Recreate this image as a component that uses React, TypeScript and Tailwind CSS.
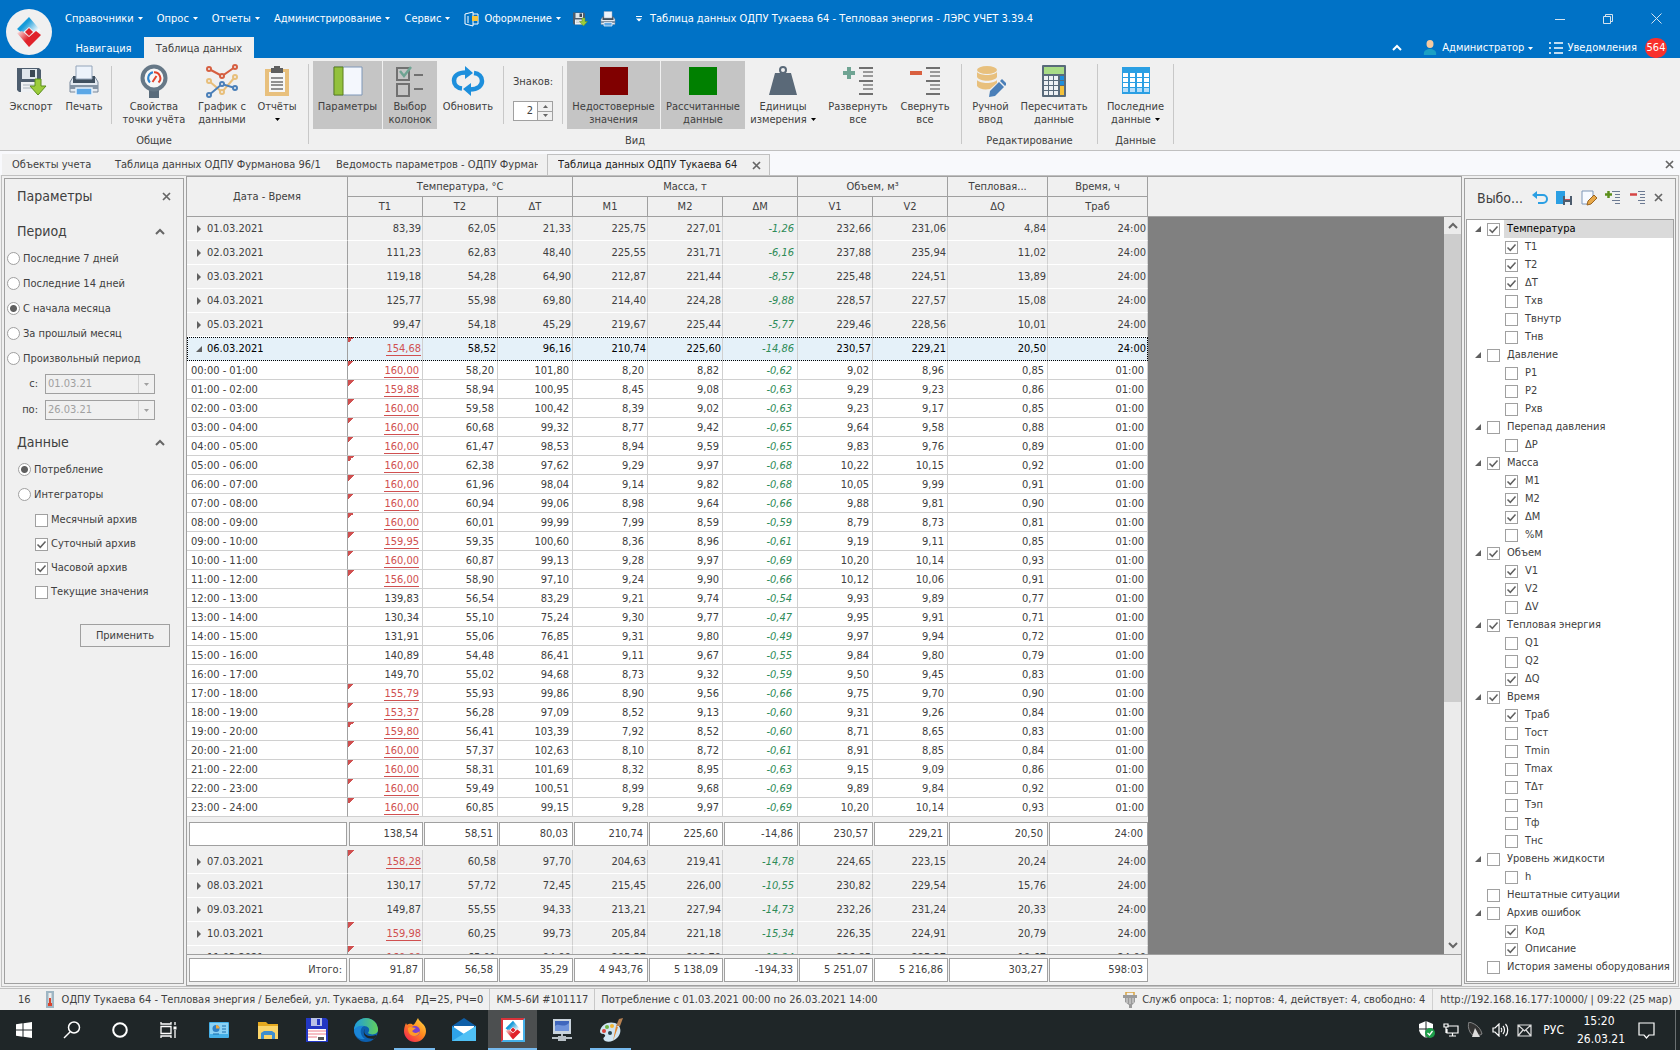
import type { ReactNode } from "react";
import { clsx } from "clsx";

type Row = { label: string; values: string[] };

const columns = ["T1", "T2", "ΔT", "M1", "M2", "ΔM", "V1", "V2", "ΔQ", "Tраб"];

const groups = [
  { title: "Температура, °C", span: 3 },
  { title: "Масса, т", span: 3 },
  { title: "Объем, м³", span: 2 },
  { title: "Тепловая...", span: 1 },
  { title: "Время, ч", span: 1 },
];

const parse = (text: string): Row[] =>
  text
    .trim()
    .split("\n")
    .map((line) => {
      const [label, ...values] = line.trim().split("|");
      return { label, values };
    });

// a leading "!" marks an unreliable value
const daysBefore = parse(`
01.03.2021|83,39|62,05|21,33|225,75|227,01|-1,26|232,66|231,06|4,84|24:00
02.03.2021|111,23|62,83|48,40|225,55|231,71|-6,16|237,88|235,94|11,02|24:00
03.03.2021|119,18|54,28|64,90|212,87|221,44|-8,57|225,48|224,51|13,89|24:00
04.03.2021|125,77|55,98|69,80|214,40|224,28|-9,88|228,57|227,57|15,08|24:00
05.03.2021|99,47|54,18|45,29|219,67|225,44|-5,77|229,46|228,56|10,01|24:00
06.03.2021|!154,68|58,52|96,16|210,74|225,60|-14,86|230,57|229,21|20,50|24:00
`);

const hours = parse(`
00:00 - 01:00|!160,00|58,20|101,80|8,20|8,82|-0,62|9,02|8,96|0,85|01:00
01:00 - 02:00|!159,88|58,94|100,95|8,45|9,08|-0,63|9,29|9,23|0,86|01:00
02:00 - 03:00|!160,00|59,58|100,42|8,39|9,02|-0,63|9,23|9,17|0,85|01:00
03:00 - 04:00|!160,00|60,68|99,32|8,77|9,42|-0,65|9,64|9,58|0,88|01:00
04:00 - 05:00|!160,00|61,47|98,53|8,94|9,59|-0,65|9,83|9,76|0,89|01:00
05:00 - 06:00|!160,00|62,38|97,62|9,29|9,97|-0,68|10,22|10,15|0,92|01:00
06:00 - 07:00|!160,00|61,96|98,04|9,14|9,82|-0,68|10,05|9,99|0,91|01:00
07:00 - 08:00|!160,00|60,94|99,06|8,98|9,64|-0,66|9,88|9,81|0,90|01:00
08:00 - 09:00|!160,00|60,01|99,99|7,99|8,59|-0,59|8,79|8,73|0,81|01:00
09:00 - 10:00|!159,95|59,35|100,60|8,36|8,96|-0,61|9,19|9,11|0,85|01:00
10:00 - 11:00|!160,00|60,87|99,13|9,28|9,97|-0,69|10,20|10,14|0,93|01:00
11:00 - 12:00|!156,00|58,90|97,10|9,24|9,90|-0,66|10,12|10,06|0,91|01:00
12:00 - 13:00|139,83|56,54|83,29|9,21|9,74|-0,54|9,93|9,89|0,77|01:00
13:00 - 14:00|130,34|55,10|75,24|9,30|9,77|-0,47|9,95|9,91|0,71|01:00
14:00 - 15:00|131,91|55,06|76,85|9,31|9,80|-0,49|9,97|9,94|0,72|01:00
15:00 - 16:00|140,89|54,48|86,41|9,11|9,67|-0,55|9,84|9,80|0,79|01:00
16:00 - 17:00|149,70|55,02|94,68|8,73|9,32|-0,59|9,50|9,45|0,83|01:00
17:00 - 18:00|!155,79|55,93|99,86|8,90|9,56|-0,66|9,75|9,70|0,90|01:00
18:00 - 19:00|!153,37|56,28|97,09|8,52|9,13|-0,60|9,31|9,26|0,84|01:00
19:00 - 20:00|!159,80|56,41|103,39|7,92|8,52|-0,60|8,71|8,65|0,83|01:00
20:00 - 21:00|!160,00|57,37|102,63|8,10|8,72|-0,61|8,91|8,85|0,84|01:00
21:00 - 22:00|!160,00|58,31|101,69|8,32|8,95|-0,63|9,15|9,09|0,86|01:00
22:00 - 23:00|!160,00|59,49|100,51|8,99|9,68|-0,69|9,89|9,84|0,92|01:00
23:00 - 24:00|!160,00|60,85|99,15|9,28|9,97|-0,69|10,20|10,14|0,93|01:00
`);

const daySummary = parse(`
|138,54|58,51|80,03|210,74|225,60|-14,86|230,57|229,21|20,50|24:00
`)[0];

const daysAfter = parse(`
07.03.2021|!158,28|60,58|97,70|204,63|219,41|-14,78|224,65|223,15|20,24|24:00
08.03.2021|130,17|57,72|72,45|215,45|226,00|-10,55|230,82|229,54|15,76|24:00
09.03.2021|149,87|55,55|94,33|213,21|227,94|-14,73|232,26|231,24|20,33|24:00
10.03.2021|!159,98|60,25|99,73|205,84|221,18|-15,34|226,35|224,91|20,79|24:00
11.03.2021|!160,00|65,01|94,99|205,57|218,79|-13,24|226,85|225,37|19,67|24:00
`);

const total = parse(`
Итого:|91,87|56,58|35,29|4 943,76|5 138,09|-194,33|5 251,07|5 216,86|303,27|598:03
`)[0];

type Node = { name: string; on?: boolean; children?: string[] };

// "+" in front of a child marks it as selected
const tree: Node[] = [
  { name: "Температура", on: true, children: ["+T1", "+T2", "+ΔT", "Tхв", "Tвнутр", "Tнв"] },
  { name: "Давление", children: ["P1", "P2", "Pхв"] },
  { name: "Перепад давления", children: ["ΔP"] },
  { name: "Масса", on: true, children: ["+M1", "+M2", "+ΔM", "%M"] },
  { name: "Объем", on: true, children: ["+V1", "+V2", "ΔV"] },
  { name: "Тепловая энергия", on: true, children: ["Q1", "Q2", "+ΔQ"] },
  { name: "Время", on: true, children: ["+Tраб", "Tост", "Tmin", "Tmax", "TΔт", "Tэп", "Tф", "Tнс"] },
  { name: "Уровень жидкости", children: ["h"] },
  { name: "Нештатные ситуации" },
  { name: "Архив ошибок", children: ["+Код", "+Описание"] },
  { name: "История замены оборудования" },
];

/* ---------- small parts ---------- */

const Caret = ({ className = "text-white" }: { className?: string }) => (
  <svg width="5" height="3" viewBox="0 0 5 3" className={clsx("shrink-0", className)}>
    <path d="M0 0h5L2.500 3z" fill="currentColor" />
  </svg>
);

const Cross = () => (
  <svg width="9" height="9" viewBox="0 0 9 9">
    <path d="M1 1l7 7M8 1l-7 7" stroke="#666" strokeWidth="1.700" />
  </svg>
);

const Chevron = ({ down = false }: { down?: boolean }) => (
  <svg width="10" height="7" viewBox="0 0 10 7" className={down ? "rotate-180" : ""}>
    <path d="M1 6l4-4 4 4" fill="none" stroke="#666" strokeWidth="2" />
  </svg>
);

const Divider = () => <div className="w-px self-stretch bg-[#c8c8c8]" />;

const CheckBox = ({ id, on }: { id: string; on?: boolean }) => (
  <span className="relative flex shrink-0">
    <input
      id={id}
      type="checkbox"
      defaultChecked={on}
      className="peer size-[13px] appearance-none border border-[#a0a0a0] bg-white"
    />
    <svg
      viewBox="0 0 13 13"
      className="pointer-events-none absolute inset-0 hidden size-[13px] peer-checked:block"
    >
      <path d="M2.500 6.500l2.800 2.800 5.200-5.800" fill="none" stroke="#606060" strokeWidth="1.500" />
    </svg>
  </span>
);

const Radio = ({ name, label, on }: { name: string; label: string; on?: boolean }) => (
  <label className="flex h-[25px] items-center gap-[3px]">
    <input
      type="radio"
      name={name}
      defaultChecked={on}
      className="size-[13px] shrink-0 appearance-none rounded-full border border-[#a0a0a0] bg-white checked:bg-[radial-gradient(circle,#5f5f5f_0_3px,#fff_4px)]"
    />
    {label}
  </label>
);

/* ---------- icons ---------- */

const SaveIcon = ({ size = 32 }: { size?: number }) => (
  <svg width={size} height={size} viewBox="0 0 32 32">
    <path d="M2 3h22l2 2v22H4l-2-2z" fill="#4d5d6e" />
    <path d="M7 4h15v10H7z" fill="#dfe6ec" />
    <path d="M15 5h5v7h-5z" fill="#3a4754" />
    <path d="M6 17h17v10H6z" fill="#eef1f4" />
    <path d="M8 20h12M8 23h12" stroke="#aab4bd" />
    <path d="M20 14h6v7h5l-8 9-8-9h5z" fill="#9ccc3c" stroke="#5c8f1c" />
  </svg>
);

const PrintIcon = ({ size = 32 }: { size?: number }) => (
  <svg width={size} height={size} viewBox="0 0 32 32">
    <path d="M5 12h3v4h16v-4h3l3 5v10H2V17z" fill="#e3e9f0" stroke="#77879b" />
    <path d="M5 11h22v7H5z" fill="#40505f" />
    <path d="M8 1h16v13H8z" fill="#edf3fb" stroke="#94a5ba" />
    <path d="M2 20h28v4H2z" fill="#8494a5" />
    <path d="M8 23h16v7H8z" fill="#5ba7e6" stroke="#e9f2fb" strokeWidth="1.500" />
  </svg>
);

const GaugeIcon = () => (
  <svg width="32" height="34" viewBox="0 0 32 34">
    <path d="M11 24h10v10H11z" fill="#596b7b" />
    <circle cx="16" cy="14" r="11.500" fill="#f7f7f7" stroke="#667887" strokeWidth="4" />
    <path d="M12 18.500A6 6 0 0 1 15 8.300" fill="none" stroke="#2f86cf" strokeWidth="2" />
    <path d="M16 8.200a6 6 0 0 1 4.500 10.300" fill="none" stroke="#e2442d" strokeWidth="2" />
    <path d="M14.500 18l4-6" stroke="#e2442d" strokeWidth="2" />
  </svg>
);

const ChartIcon = () => (
  <svg width="34" height="34" viewBox="0 0 34 34" fill="none" strokeWidth="2">
    <g stroke="#e8bf7b">
      <path d="M4 17l13 11 13-15" />
      <circle cx="4" cy="17" r="2" fill="#f0f0f0" />
      <circle cx="17" cy="28" r="2" fill="#f0f0f0" />
      <circle cx="30" cy="13" r="2" fill="#f0f0f0" />
    </g>
    <g stroke="#d65f41">
      <path d="M4 5l13 7L30 3" />
      <circle cx="4" cy="5" r="2" fill="#f0f0f0" />
      <circle cx="17" cy="12" r="2" fill="#f0f0f0" />
      <circle cx="30" cy="3" r="2" fill="#f0f0f0" />
    </g>
    <g stroke="#4a7fb8">
      <path d="M4 31l13-11 13 4" />
      <circle cx="4" cy="31" r="2" fill="#f0f0f0" />
      <circle cx="17" cy="20" r="2" fill="#f0f0f0" />
      <circle cx="30" cy="24" r="2" fill="#f0f0f0" />
    </g>
  </svg>
);

const ClipboardIcon = () => (
  <svg width="24" height="32" viewBox="0 0 24 32">
    <path d="M0 4h24v27H0z" fill="#e8c07d" />
    <path d="M4 7h16v20H4z" fill="#f6f6f6" />
    <path d="M6 3h3V1h6v2h3v5H6z" fill="#5f5f5f" />
    <path d="M6 13h12M6 17h12M6 20h12M6 24h12" stroke="#707070" strokeWidth="1.500" />
  </svg>
);

const PanelIcon = () => (
  <svg width="30" height="32" viewBox="0 0 30 32">
    <path d="M1 2h28v28H1z" fill="#f4f7fd" stroke="#7e97b8" />
    <path d="M1 2h9v28H1z" fill="#93c13d" stroke="#5c7f1f" />
  </svg>
);

const ColumnsIcon = () => (
  <svg width="30" height="32" viewBox="0 0 30 32" fill="none" stroke="#717171" strokeWidth="2">
    <path d="M2 3h12v12H2zM2 19h12v12H2zM19 10h9M19 24h9" />
    <path d="M5 6l4 5 7-9" stroke="#6fa493" strokeWidth="2.500" />
  </svg>
);

const RefreshIcon = () => (
  <svg width="34" height="32" viewBox="0 0 34 32" fill="none" stroke="#1d8fdc" strokeWidth="4.500">
    <path d="M11 23.500C6 23 3 20 3 15.500S7 7.500 15 7.500" />
    <path d="M23 8c5 .5 8 3.500 8 8s-4 8.500-12 8.500" />
    <path d="M14 1l8 7-8 6zM20 18l-8 6 8 7z" fill="#1d8fdc" stroke="none" />
  </svg>
);

const WeightIcon = () => (
  <svg width="28" height="32" viewBox="0 0 28 32">
    <circle cx="14" cy="5" r="3" fill="none" stroke="#5a6978" strokeWidth="2" />
    <path d="M6 8h16l6 22H0z" fill="#5a6978" />
  </svg>
);

const ListIcon = ({ minus = false, size = 32 }: { minus?: boolean; size?: number }) => (
  <svg width={size} height={size} viewBox="0 0 32 32" strokeWidth="2">
    <path d="M17 3h14M17 16h14M17 29h14" stroke="#707070" />
    <path d="M21 7h10M21 11h10M21 20h10M21 24h10" stroke="#999" />
    {minus ? (
      <path d="M1 8h12" stroke="#d9603f" strokeWidth="4" />
    ) : (
      <path d="M1 8h12M7 2v12" stroke="#6fa493" strokeWidth="4" />
    )}
  </svg>
);

const DatabaseIcon = () => (
  <svg width="30" height="32" viewBox="0 0 30 32">
    <g fill="#e8c07d">
      <ellipse cx="11" cy="5" rx="10" ry="4" />
      <path d="M1 7c3 4 17 4 20 0v5c-3 5-17 5-20 0z" />
      <path d="M1 15c3 4 17 4 20 0v3l-7 6C8 25 3 24 1 21z" />
    </g>
    <path d="M13 32l1-6 9-9 5 5-9 9z" fill="#4a7fb8" />
    <path d="M24 16l2-2 5 5-2 2z" fill="#4a7fb8" />
  </svg>
);

const CalcIcon = () => (
  <svg width="24" height="32" viewBox="0 0 24 32">
    <rect width="24" height="32" rx="1" fill="#596a7a" />
    <path d="M2 2h20v7H2z" fill="#a9dc86" />
    <g fill="#eef1f4">
      {[11, 16, 21, 26].map((y) =>
        [2, 7, 12].map((x) => <rect key={`${x}-${y}`} x={x} y={y} width="4" height="4" />),
      )}
    </g>
    <path d="M18 11h4v4h-4zM18 16h4v4h-4z" fill="#1d8fdc" />
    <path d="M18 21h4v9h-4z" fill="#f4c13a" />
  </svg>
);

const GridIcon = () => (
  <svg width="28" height="28" viewBox="0 0 28 28">
    <path d="M0 0h28v27H0z" fill="#2b9fe3" />
    {[6, 11, 16, 21].map((y) =>
      [1, 8, 15, 22].map((x) => (
        <rect key={`${x}-${y}`} x={x} y={y} width="5" height="4" fill={y === 21 ? "#b7defa" : "#fff"} />
      )),
    )}
  </svg>
);

const LersMark = ({ size }: { size: number }) => (
  <svg width={size} height={size} viewBox="0 0 32 32">
    <defs>
      <linearGradient id="lersBlue" x1="0" x2="1" y1="0" y2="0.600">
        <stop offset="0.450" stopColor="#179bd9" />
        <stop offset="1" stopColor="#f4f9fc" />
      </linearGradient>
      <linearGradient id="lersRed" x1="1" x2="0" y1="0.600" y2="0">
        <stop offset="0.450" stopColor="#e0222a" />
        <stop offset="1" stopColor="#fbeeee" />
      </linearGradient>
    </defs>
    <path d="M16 1l12 14-5 2-7-6-7 6-5-4z" fill="url(#lersBlue)" />
    <path d="M16 31L4 17l5-2 7 6 7-6 5 4z" fill="url(#lersRed)" />
    <path d="M16 12l4 4-4 4-4-4z" fill="#e0222a" />
  </svg>
);

/* ---------- title bar ---------- */

const MenuItem = ({ children, icon }: { children: string; icon?: ReactNode }) => (
  <button className="flex items-center gap-1 whitespace-nowrap">
    {icon}
    {children}
    <Caret />
  </button>
);

const TitleBar = () => (
  <header className="flex h-[58px] shrink-0 bg-[#0072c6] text-white">
    <div className="relative w-[60px] shrink-0">
      <div className="absolute left-[6px] top-[9px] z-10 flex size-[46px] items-center justify-center rounded-full bg-[#f0f0f0]">
        <LersMark size={32} />
      </div>
    </div>
    <div className="flex min-w-0 flex-1 flex-col">
      <div className="flex h-[37px] items-center pl-[5px]">
        <nav className="flex gap-[14px]">
          <MenuItem>Справочники</MenuItem>
          <MenuItem>Опрос</MenuItem>
          <MenuItem>Отчеты</MenuItem>
          <MenuItem>Администрирование</MenuItem>
          <MenuItem>Сервис</MenuItem>
          <MenuItem
            icon={
              <svg width="16" height="16" viewBox="0 0 16 16" fill="none" stroke="#fff">
                <path d="M1 3l8-2v14l-8-2zM4 5v7M9 3h5v10H9" />
                <path d="M8 5h6v5H8z" fill="#f8c43c" stroke="none" />
              </svg>
            }
          >
            Оформление
          </MenuItem>
        </nav>
        <div className="flex items-center gap-3 pl-[11px]">
          <button aria-label="Экспорт">
            <SaveIcon size={16} />
          </button>
          <button aria-label="Печать">
            <PrintIcon size={16} />
          </button>
        </div>
        <div className="flex items-center gap-2 whitespace-nowrap pl-5">
          <svg width="6" height="6" viewBox="0 0 6 6" fill="#fff">
            <path d="M0 0h6v1H0zM0 2.500h6l-3 3z" />
          </svg>
          <h1 className="pt-px">Таблица данных ОДПУ Тукаева 64 - Тепловая энергия - ЛЭРС УЧЕТ 3.39.4</h1>
        </div>
        <div className="ml-auto flex items-center gap-[38px] pr-[18px]">
          <button aria-label="Свернуть окно">
            <svg width="10" height="10" viewBox="0 0 10 10" stroke="#d5e3ee">
              <path d="M0 5.500h10" />
            </svg>
          </button>
          <button aria-label="Восстановить">
            <svg width="10" height="10" viewBox="0 0 10 10" fill="none" stroke="#d5e3ee">
              <path d="M.5 2.500h7v7h-7zM2.500 2.500v-2h7v7h-2" />
            </svg>
          </button>
          <button aria-label="Закрыть окно">
            <svg width="11" height="11" viewBox="0 0 11 11" stroke="#d5e3ee">
              <path d="M.5.5l10 10M10.500.5l-10 10" />
            </svg>
          </button>
        </div>
      </div>
      <div className="flex h-[21px] items-stretch pl-[10px]">
        <button className="mr-[7px] w-[67px] whitespace-nowrap pt-[3px] text-center">Навигация</button>
        <button className="w-[110px] bg-[#f0f0f0] pt-[3px] text-center text-[#404040]">Таблица данных</button>
        <div className="ml-auto flex items-center pr-[13px]">
          <svg width="10" height="7" viewBox="0 0 10 7" className="mr-[21px]">
            <path d="M1 6l4-4 4 4" fill="none" stroke="#fff" strokeWidth="2" />
          </svg>
          <svg width="14" height="16" viewBox="0 0 14 16">
            <path d="M1 15c-2-8 14-8 12 0z" fill="#1ba0c4" />
            <ellipse cx="7" cy="4" rx="3.500" ry="4" fill="#f6c9a0" />
          </svg>
          <button className="ml-[5px] flex items-center gap-1 pt-px">
            Администратор
            <Caret />
          </button>
          <svg width="14" height="12" viewBox="0 0 14 12" stroke="#fff" strokeWidth="1.500" className="ml-4">
            <path d="M0 1h2M0 6h2M0 11h2M5 1h9M5 6h9M5 11h9" />
          </svg>
          <span className="ml-1 pt-px">Уведомления</span>
          <span className="ml-2 flex h-5 w-[22px] items-center justify-center rounded-full bg-[#f9302c]">564</span>
        </div>
      </div>
    </div>
  </header>
);

/* ---------- ribbon ---------- */

type RibbonButtonProps = {
  icon: ReactNode;
  lines: string[];
  width: string;
  pressed?: boolean;
  menu?: boolean;
};

const RibbonButton = ({ icon, lines, width, pressed, menu }: RibbonButtonProps) => (
  <button
    className={clsx(
      "flex h-[68px] shrink-0 flex-col items-center whitespace-nowrap pt-[2px] leading-[13px]",
      width,
      pressed && "bg-[#c5c5c5]",
    )}
  >
    <span className="mb-px flex h-9 items-center">{icon}</span>
    {lines.map((line, i) => (
      <span key={line} className="flex h-[13px] items-center gap-1">
        {line}
        {menu && lines.length === 2 && i === 1 && <Caret className="text-black" />}
      </span>
    ))}
    {menu && lines.length === 1 && (
      <span className="flex h-[13px] items-center">
        <Caret className="text-black" />
      </span>
    )}
  </button>
);

const RibbonGroup = ({ title, children }: { title: string; children: ReactNode }) => (
  <section className="flex shrink-0">
    <div>
      <div className="flex">{children}</div>
      <h2 className="flex h-[21px] items-center justify-center pt-[3px]">{title}</h2>
    </div>
    <div className="mb-[6px] mt-[3px] w-px bg-[#c8c8c8]" />
  </section>
);

const InnerSeparator = () => <div className="my-[5px] w-px bg-[#c8c8c8]" />;

const Ribbon = () => (
  <div className="flex h-[93px] shrink-0 overflow-hidden border-b border-[#c0c0c0] bg-[#f0f0f0] pt-[3px]">
    <RibbonGroup title="Общие">
      <div className="flex pl-[5px]">
        <RibbonButton icon={<SaveIcon />} lines={["Экспорт"]} width="w-[52px]" />
        <RibbonButton icon={<PrintIcon />} lines={["Печать"]} width="w-[54px]" />
      </div>
      <InnerSeparator />
      <div className="flex pl-1 pr-[6px]">
        <RibbonButton icon={<GaugeIcon />} lines={["Свойства", "точки учёта"]} width="w-[76px]" />
        <RibbonButton icon={<ChartIcon />} lines={["График с", "данными"]} width="w-[60px]" />
        <RibbonButton icon={<ClipboardIcon />} lines={["Отчёты"]} width="w-[50px]" menu />
      </div>
    </RibbonGroup>
    <RibbonGroup title="Вид">
      <div className="flex gap-px pl-1 pr-[5px]">
        <RibbonButton icon={<PanelIcon />} lines={["Параметры"]} width="w-[69px]" pressed />
        <RibbonButton icon={<ColumnsIcon />} lines={["Выбор", "колонок"]} width="w-[54px]" pressed />
        <RibbonButton icon={<RefreshIcon />} lines={["Обновить"]} width="w-[60px]" />
      </div>
      <InnerSeparator />
      <div className="flex w-[58px] flex-col items-start gap-3 pl-[9px] pt-[14px]">
        <label htmlFor="digits" className="leading-[14px]">
          Знаков:
        </label>
        <div className="flex h-[20px] w-[40px] border border-[#a0a0a0] bg-white">
          <input id="digits" defaultValue="2" className="w-[23px] min-w-0 pr-1 text-right outline-none" />
          <div className="flex flex-1 flex-col border-l border-[#a0a0a0] bg-[#f0f0f0]">
            <button
              aria-label="Больше"
              className="flex flex-1 items-center justify-center border-b border-[#a0a0a0] text-[#666]"
            >
              <Caret className="rotate-180" />
            </button>
            <button aria-label="Меньше" className="flex flex-1 items-center justify-center text-[#666]">
              <Caret className="" />
            </button>
          </div>
        </div>
      </div>
      <InnerSeparator />
      <div className="flex gap-px pl-1">
        <RibbonButton
          icon={<span className="h-7 w-7 bg-[#800000]" />}
          lines={["Недостоверные", "значения"]}
          width="w-[93px]"
          pressed
        />
        <RibbonButton
          icon={<span className="h-7 w-7 bg-[#008000]" />}
          lines={["Рассчитанные", "данные"]}
          width="w-[84px]"
          pressed
        />
      </div>
      <div className="flex pr-[6px]">
        <RibbonButton icon={<WeightIcon />} lines={["Единицы", "измерения"]} width="w-[76px]" menu />
        <RibbonButton icon={<ListIcon />} lines={["Развернуть", "все"]} width="w-[74px]" />
        <RibbonButton icon={<ListIcon minus />} lines={["Свернуть", "все"]} width="w-[60px]" />
      </div>
    </RibbonGroup>
    <RibbonGroup title="Редактирование">
      <div className="flex px-[4px]">
        <RibbonButton icon={<DatabaseIcon />} lines={["Ручной", "ввод"]} width="w-[49px]" />
        <RibbonButton icon={<CalcIcon />} lines={["Пересчитать", "данные"]} width="w-[78px]" />
      </div>
    </RibbonGroup>
    <RibbonGroup title="Данные">
      <div className="flex px-[3px]">
        <RibbonButton icon={<GridIcon />} lines={["Последние", "данные"]} width="w-[69px]" menu />
      </div>
    </RibbonGroup>
  </div>
);

/* ---------- document tabs ---------- */

const DocumentTabs = () => (
  <div className="flex h-[24px] shrink-0 bg-[#f8f9fc] pl-[2px] pt-[3px]">
    <div className="flex items-stretch whitespace-nowrap bg-[#f0f0f0]">
      <button className="w-[102px] overflow-hidden pl-[10px] text-left">Объекты учета</button>
      <button className="w-[221px] overflow-hidden pl-[11px] text-left">Таблица данных ОДПУ Фурманова 96/1</button>
      <button className="flex w-[222px] items-center pl-[11px] pr-[9px] text-left">
        <span className="overflow-hidden">Ведомость параметров - ОДПУ Фурманова 96/1</span>
      </button>
    </div>
    <div className="flex w-[223px] items-center justify-between border border-b-0 border-[#c0c0c0] bg-[#f0f0f0] pl-[10px] pr-2 text-[#202020]">
      <button className="w-[182px] overflow-hidden whitespace-nowrap text-left">
        Таблица данных ОДПУ Тукаева 64 ·
      </button>
      <button aria-label="Закрыть вкладку">
        <Cross />
      </button>
    </div>
    <button aria-label="Закрыть" className="ml-auto pr-[6px]">
      <Cross />
    </button>
  </div>
);

/* ---------- parameters panel ---------- */

const SectionHeader = ({ children }: { children: string }) => (
  <h3 className="flex h-8 items-center justify-between pl-3 pr-[18px] pt-[2px] text-[14px]">
    {children}
    <Chevron />
  </h3>
);

const DateField = ({ id, label, value }: { id: string; label: string; value: string }) => (
  <div className="flex h-[26px] items-center gap-[7px] pl-[10px]">
    <label htmlFor={id} className="w-[23px] text-right">
      {label}
    </label>
    <div className="flex h-[20px] w-[110px] border border-[#a0a0a0] text-[#a0a0a0]">
      <input id={id} disabled defaultValue={value} className="min-w-0 flex-1 pl-[2px]" />
      <button disabled aria-label="Календарь" className="flex w-4 items-center justify-center border-l border-[#d0d0d0]">
        <Caret className="" />
      </button>
    </div>
  </div>
);

const ParametersPanel = () => (
  <aside className="w-[180px] shrink-0 border border-[#a0a0a0]">
    <div className="flex h-[35px] items-center justify-between px-3 pb-px text-[14px]">
      <h2>Параметры</h2>
      <button aria-label="Закрыть панель">
        <Cross />
      </button>
    </div>
    <SectionHeader>Период</SectionHeader>
    <div className="pl-[2px]">
      <Radio name="period" label="Последние 7 дней" />
      <Radio name="period" label="Последние 14 дней" />
      <Radio name="period" label="С начала месяца" on />
      <Radio name="period" label="За прошлый месяц" />
      <Radio name="period" label="Произвольный период" />
    </div>
    <div className="pb-[2px]">
      <DateField id="from" label="с:" value="01.03.21" />
      <DateField id="to" label="по:" value="26.03.21" />
    </div>
    <SectionHeader>Данные</SectionHeader>
    <div className="pl-[13px]">
      <Radio name="kind" label="Потребление" on />
      <Radio name="kind" label="Интеграторы" />
    </div>
    <div className="pl-[30px] pt-px">
      {["Месячный архив", "+Суточный архив", "+Часовой архив", "Текущие значения"].map((item) => (
        <div key={item} className="flex h-6 items-center gap-[3px]">
          <CheckBox id={item} on={item.startsWith("+")} />
          <label htmlFor={item}>{item.replace("+", "")}</label>
        </div>
      ))}
    </div>
    <button className="ml-[75px] mt-5 h-[23px] w-[90px] border border-[#a0a0a0]">Применить</button>
  </aside>
);

/* ---------- grid ---------- */

const Cols = () => (
  <colgroup>
    <col className="w-[161px]" />
    {columns.map((c, i) => (
      <col key={c} className={i > 7 ? "w-[100px]" : "w-[75px]"} />
    ))}
  </colgroup>
);

const tableClass = "w-[961px] table-fixed border-separate border-spacing-0";

const ValueCell = ({ value, index, pad }: { value: string; index: number; pad: string }) => {
  const bad = value.startsWith("!");
  return (
    <td
      className={clsx(
        "border-b border-r border-b-inherit border-r-[#d0d0d0] p-0 text-right",
        pad,
        bad &&
          "bg-[linear-gradient(135deg,#d05050_50%,transparent_50%)] bg-[length:6px_6px] bg-no-repeat",
      )}
    >
      <span
        className={clsx(
          bad && "border-b border-[#d05050] text-[#d05050]",
          index === 5 && "pr-[2px] italic text-[#2e8b57]",
        )}
      >
        {value.replace("!", "")}
      </span>
    </td>
  );
};

const DayRow = ({ row, open }: { row: Row; open?: boolean }) => (
  <tr
    className={clsx(
      "h-6",
      open
        ? "border-[#e5f1f9] bg-[#e5f1f9] text-black outline-1 -outline-offset-1 outline-dotted outline-black"
        : "border-white bg-[#f0f0f0]",
    )}
  >
    <td className="border-b border-r border-b-inherit border-r-[#a0a0a0] p-0 pt-px">
      <span className="flex items-center gap-[5px] pl-[9px]">
        <svg width="6" height="8" viewBox="0 0 6 8" fill="#606060">
          <path d={open ? "M6 1v6H0z" : "M1 0l4 4-4 4z"} />
        </svg>
        {row.label}
      </span>
    </td>
    {row.values.map((v, i) => (
      <ValueCell key={i} value={v} index={i} pad="pr-px pt-px" />
    ))}
  </tr>
);

const SummaryRow = ({ row, height }: { row: Row; height: string }) => (
  <tr className={clsx("bg-[#f0f0f0]", height)}>
    {[row.label, ...row.values].map((v, i) => (
      <td key={i} className={clsx("p-0", i === 0 ? "pl-[2px] pr-px" : "pl-px")}>
        <div className="flex h-6 items-center justify-end border border-[#a0a0a0] bg-white pr-1">{v}</div>
      </td>
    ))}
  </tr>
);

const headClass = "border-b border-r border-[#a0a0a0] p-0 text-center font-normal";

const DataGrid = () => (
  <main className="flex min-w-0 flex-1 flex-col border border-[#a0a0a0] bg-[#f0f0f0]">
    <div className="shrink-0 overflow-hidden border-b border-[#a0a0a0]">
      <table className={tableClass}>
        <Cols />
        <thead>
          <tr className="h-5">
            <th rowSpan={2} className="border-r border-[#a0a0a0] p-0 text-center font-normal">
              Дата - Время
            </th>
            {groups.map((g) => (
              <th key={g.title} colSpan={g.span} className={headClass}>
                {g.title}
              </th>
            ))}
          </tr>
          <tr className="h-[19px]">
            {columns.map((c) => (
              <th key={c} className="border-r border-[#a0a0a0] p-0 text-center font-normal">
                {c}
              </th>
            ))}
          </tr>
        </thead>
      </table>
    </div>
    <div className="flex min-h-0 flex-1 bg-[#808080]">
      <div className="min-w-0 flex-1 overflow-hidden">
        <table className={tableClass}>
          <Cols />
          <tbody>
            {daysBefore.map((row, i) => (
              <DayRow key={row.label} row={row} open={i === 5} />
            ))}
            {hours.map((row) => (
              <tr key={row.label} className="h-[19px] border-[#d0d0d0] bg-white leading-[15px]">
                <td className="border-b border-r border-b-inherit border-r-[#a0a0a0] p-0 pl-1">{row.label}</td>
                {row.values.map((v, i) => (
                  <ValueCell key={i} value={v} index={i} pad="pr-[3px]" />
                ))}
              </tr>
            ))}
            <SummaryRow row={daySummary} height="h-[33px]" />
            {daysAfter.map((row) => (
              <DayRow key={row.label} row={row} />
            ))}
          </tbody>
        </table>
      </div>
      <div className="flex w-[17px] shrink-0 flex-col items-center bg-[#ebebeb]">
        <button aria-label="Вверх" className="flex h-[17px] items-center">
          <Chevron />
        </button>
        <div className="w-full flex-[468] bg-[#cdcdcd]" />
        <div className="flex-[235]" />
        <button aria-label="Вниз" className="flex h-[17px] items-center">
          <Chevron down />
        </button>
      </div>
    </div>
    <div className="shrink-0 overflow-hidden border-t border-[#a0a0a0]">
      <table className={tableClass}>
        <Cols />
        <tfoot>
          <SummaryRow row={total} height="h-[30px]" />
        </tfoot>
      </table>
    </div>
  </main>
);

/* ---------- column chooser ---------- */

const ColumnsPanel = () => (
  <aside className="flex w-[212px] shrink-0 flex-col border border-[#a0a0a0] px-px pb-px">
    <div className="flex h-10 shrink-0 items-center px-[11px] pb-[3px]">
      <h2 className="w-[55px] text-[14px]">Выбо...</h2>
      <div className="flex flex-1 items-center justify-between">
        <button aria-label="Отменить">
          <svg width="16" height="14" viewBox="0 0 16 14" fill="none" stroke="#2b9fe3" strokeWidth="2">
            <path d="M2 4h9a4 4 0 0 1 0 8H6" />
            <path d="M5 0v8L0 4z" fill="#2b9fe3" stroke="none" />
          </svg>
        </button>
        <button aria-label="Сохранить">
          <svg width="16" height="16" viewBox="0 0 16 16">
            <path d="M0 1h9v13H0z" fill="#2b9fe3" />
            <path d="M7 6h9v9H7z" fill="#4d5d6e" />
            <path d="M9 6h5v4H9zM9 12h5v3H9z" fill="#e9edf1" />
            <path d="M9 9h5v1H9z" fill="#d05050" />
          </svg>
        </button>
        <button aria-label="Изменить">
          <svg width="16" height="16" viewBox="0 0 16 16">
            <path d="M1 1h11v9l-4 4H1z" fill="#f7faff" stroke="#7e97b8" />
            <path d="M6 15l1-4 6-6 3 3-6 6z" fill="#e8a94a" stroke="#9a6420" />
          </svg>
        </button>
        <button aria-label="Развернуть все">
          <svg width="16" height="16" viewBox="0 0 16 16">
            <path d="M7 1.500h8M10 4.500h5M10 7.500h5M7 10.500h8M10 13.500h5" stroke="#6c7a92" />
            <path d="M0 4.500h7M3.500 1v7" stroke="#5c8f1c" strokeWidth="2.500" />
          </svg>
        </button>
        <button aria-label="Свернуть все">
          <svg width="16" height="16" viewBox="0 0 16 16">
            <path d="M8 1.500h7M10 4.500h5M10 7.500h5M8 10.500h7M10 13.500h5" stroke="#6c7a92" />
            <path d="M0 4.500h7" stroke="#d64545" strokeWidth="2.500" />
          </svg>
        </button>
        <button aria-label="Закрыть панель колонок">
          <Cross />
        </button>
      </div>
    </div>
    <div className="min-h-0 flex-1 overflow-hidden border border-[#a0a0a0] bg-white">
      {tree.map((node, n) => (
        <div key={node.name}>
          <div className="flex h-[18px] items-center pl-2">
            <svg width="6" height="6" viewBox="0 0 6 6" className="mr-[6px] shrink-0" fill="#606060">
              {node.children && <path d="M6 0v6H0z" />}
            </svg>
            <CheckBox id={node.name} on={node.on} />
            <label
              htmlFor={node.name}
              className={clsx(
                "ml-1 flex h-[18px] flex-1 items-center whitespace-nowrap pl-[3px]",
                n === 0 && "bg-[#dadada] text-black",
              )}
            >
              {node.name}
            </label>
          </div>
          {node.children?.map((child) => (
            <div key={child} className="flex h-[18px] items-center gap-[7px] pl-[38px]">
              <CheckBox id={`col-${child}`} on={child.startsWith("+")} />
              <label htmlFor={`col-${child}`}>{child.replace("+", "")}</label>
            </div>
          ))}
        </div>
      ))}
    </div>
  </aside>
);

/* ---------- status bar and taskbar ---------- */

const StatusBar = () => (
  <footer className="flex h-[22px] shrink-0 items-center whitespace-nowrap border-t border-[#c0c0c0] bg-[#f0f0f0] pl-[18px] pr-2">
    <span>16</span>
    <svg width="8" height="17" viewBox="0 0 8 17" className="ml-[15px] mr-2">
      <path d="M0 0h8v17H0z" fill="#9fb6c4" />
      <path d="M2.500 2h3v13h-3z" fill="#eee" />
      <path d="M3 7h2v5h1v3H2v-3h1z" fill="#d8432e" />
    </svg>
    <span>ОДПУ Тукаева 64 - Тепловая энергия / Белебей, ул. Тукаева, д.64</span>
    <span className="ml-[11px] mr-[6px]">РД=25, РЧ=0</span>
    <Divider />
    <span className="mx-[6px]">КМ-5-6И #101117</span>
    <Divider />
    <span className="mx-[6px]">Потребление с 01.03.2021 00:00 по 26.03.2021 14:00</span>
    <div className="ml-auto flex items-center gap-[5px] self-stretch">
      <svg width="14" height="16" viewBox="0 0 14 16">
        <path d="M3 0h8v4H3z" fill="none" stroke="#d9a441" strokeWidth="1.500" />
        <path d="M0 3h14v3H0zM2 6h10v4l-3 3v3H6v-3L2 10z" fill="#9a9a9a" />
        <path d="M4 6v5M7 6v6M10 6v5" stroke="#ddd" />
      </svg>
      <span>Служб опроса: 1; портов: 4, действует: 4, свободно: 4</span>
      <div className="ml-[2px] w-px self-stretch bg-[#d0d0d0]" />
      <span className="ml-[2px]">http://192.168.16.177:10000/ | 09:22 (25 мар)</span>
    </div>
  </footer>
);

type TaskProps = { label: string; children: ReactNode; system?: boolean; active?: boolean; running?: boolean };

const Task = ({ label, children, system, active, running }: TaskProps) => (
  <button
    aria-label={label}
    className={clsx(
      "relative flex shrink-0 items-center justify-center",
      system ? "w-12" : "w-[49px]",
      active && "bg-[#4c4f50]",
    )}
  >
    {children}
    {(active || running) && (
      <span className={clsx("absolute bottom-0 h-[2px] bg-[#76b9ed]", active ? "inset-x-0" : "inset-x-[4px]")} />
    )}
  </button>
);

const Taskbar = () => (
  <div className="flex h-10 shrink-0 items-stretch bg-[#1f2628] text-white">
    <div className="mr-[2px] flex">
      <Task label="Пуск" system>
        <svg width="16" height="16" viewBox="0 0 16 16" fill="#fff">
          <path d="M0 2.200L6.500 1.300v6.200H0zM7.500 1.200L16 0v7.500H7.500zM0 8.500h6.500v6.200L0 13.800zM7.500 8.500H16V16l-8.500-1.200z" />
        </svg>
      </Task>
      <Task label="Поиск" system>
        <svg width="18" height="18" viewBox="0 0 18 18" fill="none" stroke="#fff" strokeWidth="1.500">
          <circle cx="11" cy="6.500" r="5.500" />
          <path d="M7 11l-6 6" />
        </svg>
      </Task>
      <Task label="Кортана" system>
        <svg width="16" height="16" viewBox="0 0 16 16" fill="none" stroke="#fff" strokeWidth="2">
          <circle cx="8" cy="8" r="6.800" />
        </svg>
      </Task>
      <Task label="Представление задач" system>
        <svg width="17" height="16" viewBox="0 0 17 16" fill="none" stroke="#fff" strokeWidth="1.300">
          <path d="M1 4.500h10v7H1zM1 0v2h10V0M1 16v-2h10v2M15 0v3M15 8v8" />
          <path d="M13.500 4.500h3v3h-3z" fill="#fff" stroke="none" />
        </svg>
      </Task>
    </div>
    <Task label="Панель управления">
      <svg width="20" height="16" viewBox="0 0 20 16">
        <rect width="20" height="16" rx="1" fill="#45b0e8" />
        <path d="M1 1h18v11H1z" fill="#8bd2f5" />
        <circle cx="7" cy="6.500" r="3.500" fill="#2f80c4" />
        <path d="M7 6.500V3a3.500 3.500 0 0 1 3.500 3.500z" fill="#f0a63c" />
        <path d="M13 4h4M13 7h4M13 10h4M4 12h6" stroke="#1b6fae" />
      </svg>
    </Task>
    <Task label="Проводник">
      <svg width="22" height="19" viewBox="0 0 22 19">
        <path d="M1 1h8l2 2h10v15H1z" fill="#e5a91f" />
        <path d="M1 5h20v13H1z" fill="#fbd56a" />
        <path d="M4 18v-6l3-2h8l3 2v6h-3v-4H7v4z" fill="#3f8fd0" />
      </svg>
    </Task>
    <Task label="Файловый менеджер">
      <svg width="24" height="24" viewBox="0 0 24 24">
        <path d="M1 0h20l2 2v22H1z" fill="#2338c4" />
        <path d="M6 0h11v8H6z" fill="#b9c2e6" />
        <path d="M12 1h3v6h-3z" fill="#2338c4" />
        <path d="M3 11h18v12H3z" fill="#fff" />
        <path d="M3 13h18M3 16h18M3 19h9" stroke="#ee7f8b" />
        <path d="M13 19h6v3h-6z" fill="#555" />
      </svg>
    </Task>
    <Task label="Edge">
      <svg width="24" height="24" viewBox="0 0 24 24">
        <defs>
          <linearGradient id="edgeTop" x1="0" x2="1">
            <stop offset="0" stopColor="#1d9be0" />
            <stop offset="1" stopColor="#63d05a" />
          </linearGradient>
        </defs>
        <circle cx="12" cy="12" r="12" fill="#0c5fae" />
        <path d="M0 12a12 12 0 0 1 24 0c0 4-6 6-10 3 3-4 0-7-4-7-5 0-9 3-10 4z" fill="url(#edgeTop)" />
        <path d="M0 12c2-4 7-5 10-4-5 2-4 10 1 13-6 1-11-3-11-9z" fill="#1b85d6" />
        <path d="M11 11c-3 5 3 9 11 6l1 1-3 3c-1-1-6 1-9-3-2-3-1-6 0-7z" fill="#1f2628" />
      </svg>
    </Task>
    <Task label="Firefox" running>
      <svg width="24" height="24" viewBox="0 0 24 24">
        <defs>
          <linearGradient id="fox" x1="1" x2="0.200" y1="0" y2="1">
            <stop offset="0" stopColor="#ffe14a" />
            <stop offset="0.500" stopColor="#ff8a1e" />
            <stop offset="1" stopColor="#f4264f" />
          </linearGradient>
        </defs>
        <path d="M3 5l1 2c3-2 5-1 6 0 2-1 3-4 5-7 1 4 8 6 8 13a11 11 0 0 1-22 0c0-3 1-6 2-8z" fill="url(#fox)" />
        <circle cx="12" cy="13" r="5" fill="#7a3fd0" />
        <path d="M5 10c3-2 5 0 8 0-2 1-2 2-4 3 2 3 6 2 8 0-1 5-6 6-9 4s-3-5-3-7z" fill="#ff9a28" />
      </svg>
    </Task>
    <Task label="Почта">
      <svg width="24" height="24" viewBox="0 0 24 24">
        <path d="M0 8l12-8 12 8v15H0z" fill="#0f5fa8" />
        <path d="M2 8h20v8H2z" fill="#fff" />
        <path d="M0 8l12 8 12-8v15H0z" fill="#2ea3ea" />
        <path d="M0 23l24-15v15z" fill="#4fc0f5" />
      </svg>
    </Task>
    <Task label="ЛЭРС УЧЕТ" active>
      <span className="flex size-6 items-center justify-center border-2 border-b-[#45b0e8] border-l-[#d9333a] border-r-[#45b0e8] border-t-[#d9333a] bg-white">
        <LersMark size={20} />
      </span>
    </Task>
    <Task label="Удалённый рабочий стол">
      <svg width="22" height="22" viewBox="0 0 22 22">
        <path d="M2 0h18v15H2z" fill="#c9d3dc" />
        <path d="M4 2h14v10H4z" fill="#3f66bd" />
        <path d="M4 7c4-4 8 3 14-3v8H4z" fill="#6f93dc" />
        <path d="M10 15h2v3h-2zM1 18h20v2H1zM7 17h8v5H7z" fill="#b8c0c6" />
      </svg>
    </Task>
    <Task label="Paint" running>
      <svg width="26" height="26" viewBox="0 0 26 26">
        <path d="M2 14C3 7 11 4 17 6s7 9 3 14-12 6-14 3 2-3 1-5-5 0-5-4z" fill="#cfe4f2" />
        <circle cx="6" cy="14" r="2" fill="#d9433a" />
        <circle cx="9" cy="10" r="2" fill="#6fb544" />
        <circle cx="14" cy="9" r="2" fill="#f2b632" />
        <circle cx="12" cy="16" r="2" fill="#26424f" />
        <path d="M15 24l3-15 2 1z" fill="#e5862b" />
        <path d="M18 9l3-7 4-1-3 8z" fill="#b88252" />
      </svg>
    </Task>

    <div className="ml-auto flex items-center">
      <div className="flex items-center gap-2">
        <svg width="16" height="18" viewBox="0 0 16 18">
          <path d="M7 0l7 3v5c0 4-3 7-7 9-4-2-7-5-7-9V3z" fill="#fff" />
          <path d="M7 0v17M0 8h14" stroke="#1f2628" />
          <circle cx="11" cy="12" r="5" fill="#1e9e4a" />
          <path d="M8.500 12l2 2 3-4" fill="none" stroke="#fff" strokeWidth="1.300" />
        </svg>
        <svg width="16" height="14" viewBox="0 0 16 14" fill="none" stroke="#fff" strokeWidth="1.200">
          <path d="M5 3h10v7H4V6M1 1h4v3H1zM3 4v6M6 13h7M9.500 10v3" />
        </svg>
        <svg width="17" height="16" viewBox="0 0 17 16">
          <path d="M2 0c8 2 12 7 13 12-5 3-10 2-12-2s-2-7-1-10z" fill="#333" stroke="#aaa" strokeWidth=".7" />
          <path d="M8 6l-3 9h8z" fill="#ddd" />
        </svg>
        <svg width="17" height="14" viewBox="0 0 17 14" fill="none" stroke="#fff" strokeWidth="1.200">
          <path d="M1 5h2l4-4v12L3 9H1zM9 5c1 1 1 3 0 4M11 3c2 2 2 6 0 8M13.500 1c3 3 3 9 0 12" />
        </svg>
        <svg width="15" height="13" viewBox="0 0 15 13" fill="none" stroke="#ddd" strokeWidth="1.200">
          <path d="M1 1h13v11H1zM1 1l6.500 6L14 1M1 12l5-6M14 12L9 6" />
        </svg>
      </div>
      <span className="ml-[11px] text-[12px]">РУС</span>
      <time className="ml-[13px] w-[44px] text-center text-[12px] leading-[18px]">
        15:20
        <br />
        26.03.21
      </time>
      <svg width="17" height="17" viewBox="0 0 17 17" fill="none" stroke="#fff" strokeWidth="1.200" className="ml-[17px]">
        <path d="M1 1h15v12h-5l-2.500 3L6 13H1z" />
      </svg>
      <div className="ml-[20px] h-full w-[5px] border-l border-[#6b7072]" />
    </div>
  </div>
);

export default function App() {
  return (
    <div className="flex h-screen flex-col overflow-hidden bg-[#f0f0f0] font-['DejaVu_Sans_Condensed','Noto_Sans',sans-serif] text-[11px] leading-[14px] text-[#404040]">
      <TitleBar />
      <Ribbon />
      <DocumentTabs />
      <div className="mx-px mb-px flex min-h-0 flex-1 gap-[2px] border border-[#c0c0c0] pl-[2px] pr-[2px]">
        <div className="flex py-[2px]">
          <ParametersPanel />
        </div>
        <DataGrid />
        <div className="flex py-[2px]">
          <ColumnsPanel />
        </div>
      </div>
      <StatusBar />
      <Taskbar />
    </div>
  );
}
